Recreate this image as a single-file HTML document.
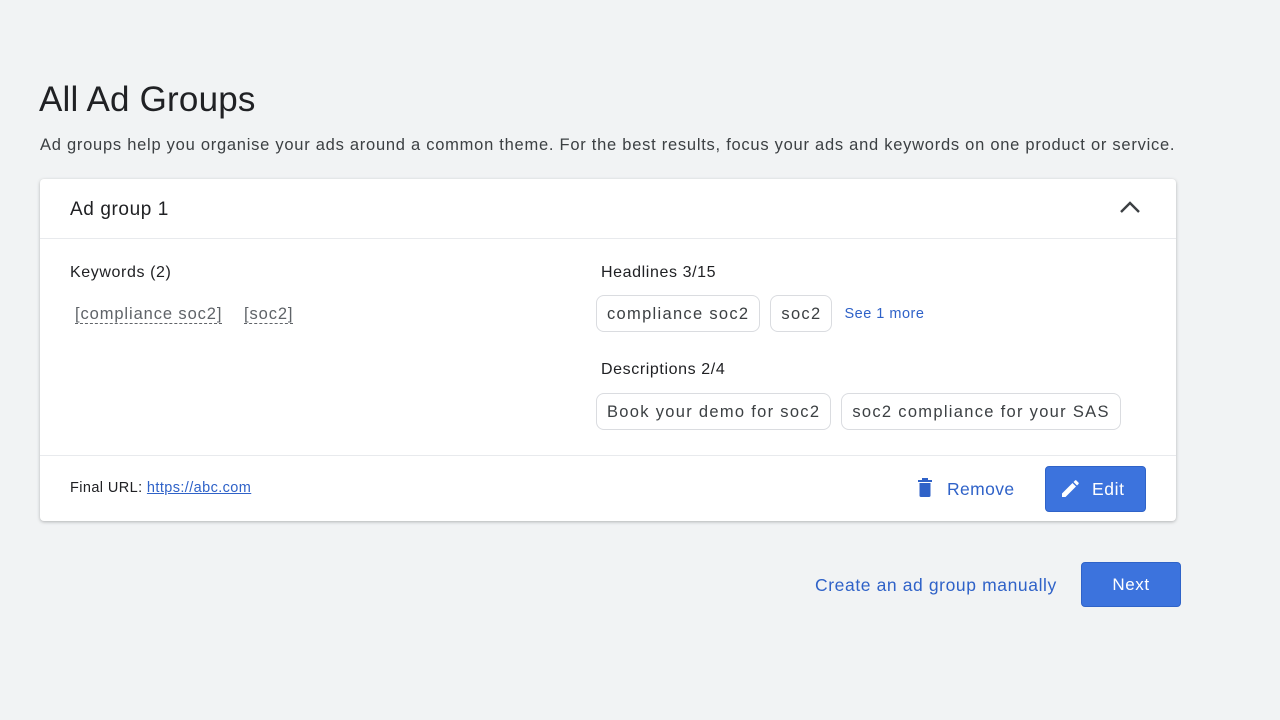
<!DOCTYPE html>
<html><head><meta charset="utf-8"><style>
*{box-sizing:border-box;margin:0;padding:0}
body{width:1280px;height:720px;background:#f1f3f4;font-family:"Liberation Sans",sans-serif;color:#202124;position:relative;overflow:hidden;letter-spacing:0.6px}
.abs{position:absolute;white-space:nowrap}
h1{position:absolute;left:39px;top:80px;font-size:35px;font-weight:400;letter-spacing:0.2px}
.sub{left:40px;top:136px;font-size:16.5px;color:#3c4043;letter-spacing:0.74px}
.card{position:absolute;left:40px;top:179px;width:1136px;height:342px;background:#fff;border-radius:4px;box-shadow:0 1px 3px rgba(60,64,67,.35)}
.hdr{position:absolute;left:0;top:0;width:100%;height:60px;border-bottom:1px solid #e8eaed}
.ftr{position:absolute;left:0;top:276px;width:100%;border-top:1px solid #e8eaed}
.lbl{font-size:16px;color:#202124}
.kw{font-size:16.5px;color:#5f6368;border-bottom:1.5px dashed #5f6368;line-height:18px;letter-spacing:0.9px}
.row{position:absolute;left:556px;display:flex;align-items:center;gap:10px}
.chip{height:37px;border:1px solid #dadce0;border-radius:8px;font-size:16.5px;color:#3c4043;line-height:36px;padding:0 10px;white-space:nowrap;letter-spacing:1.3px}
.btn{position:absolute;background:#3c73dd;color:#fff;border-radius:4px;font-size:17px;text-align:center;border:1px solid #2f63c8}
.blue{color:#2f62c8}
</style></head><body>
<h1>All Ad Groups</h1>
<div class="abs sub">Ad groups help you organise your ads around a common theme. For the best results, focus your ads and keywords on one product or service.</div>
<div class="card">
 <div class="hdr"></div>
 <div class="abs" style="left:30px;top:20px;font-size:19px">Ad group 1</div>
 <svg class="abs" style="left:1079px;top:21px" width="22" height="14" viewBox="0 0 22 14"><path d="M2 12 L11 3 L20 12" fill="none" stroke="#3c4043" stroke-width="2.4"/></svg>
 <div class="abs lbl" style="left:30px;top:85px">Keywords (2)</div>
 <div class="abs kw" style="left:35px;top:126px">[compliance soc2]</div>
 <div class="abs kw" style="left:204px;top:126px">[soc2]</div>
 <div class="abs lbl" style="left:561px;top:85px">Headlines 3/15</div>
 <div class="row" style="top:116px"><div class="chip">compliance soc2</div><div class="chip">soc2</div><div class="blue" style="font-size:14.5px;margin-left:2px;letter-spacing:0.5px">See 1 more</div></div>
 <div class="abs lbl" style="left:561px;top:182px">Descriptions 2/4</div>
 <div class="row" style="top:214px"><div class="chip">Book your demo for soc2</div><div class="chip">soc2 compliance for your SAS</div></div>
 <div class="ftr"></div>
 <div class="abs" style="left:30px;top:301px;font-size:14.5px;letter-spacing:0.4px">Final URL: <span class="blue" style="text-decoration:underline">https://abc.com</span></div>
 <svg class="abs" style="left:877px;top:299px" width="16" height="19" viewBox="0 0 16 19"><path d="M1 2h14v2H1zM5 0h6v2H5zM2.5 5h11v12.5a1.5 1.5 0 0 1-1.5 1.5H4a1.5 1.5 0 0 1-1.5-1.5z" fill="#2f62c8"/></svg>
 <div class="abs blue" style="left:907px;top:300px;font-size:17.5px;letter-spacing:0.4px">Remove</div>
 <div class="btn" style="left:1005px;top:287px;width:101px;height:46px"></div>
 <svg class="abs" style="left:1021px;top:299px" width="20" height="20" viewBox="0 0 20 20"><path d="M1 15.5V19h3.5L15 8.5 11.5 5zM17.5 6a1 1 0 0 0 0-1.4l-2.1-2.1a1 1 0 0 0-1.4 0L12.5 4l3.5 3.5z" fill="#fff"/></svg>
 <div class="abs" style="left:1052px;top:300px;font-size:17.5px;color:#fff">Edit</div>
</div>
<div class="abs blue" style="left:815px;top:575px;font-size:17.5px">Create an ad group manually</div>
<div class="btn" style="left:1081px;top:562px;width:100px;height:45px;line-height:43px">Next</div>
</body></html>
